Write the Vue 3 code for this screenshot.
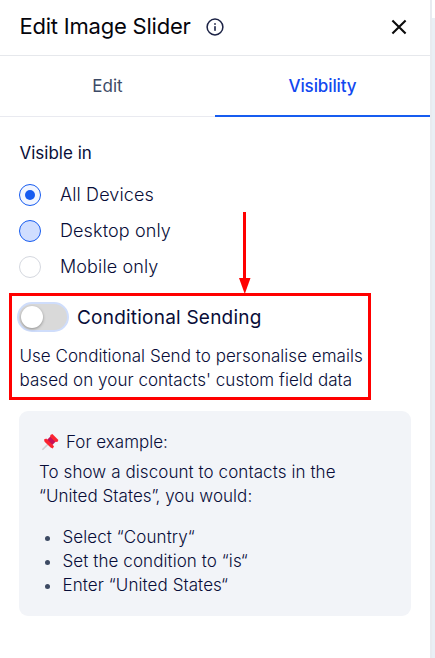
<script setup>
import { ref } from 'vue';

const tabs = ['Edit', 'Visibility'];
const activeTab = ref('Visibility');

const devices = ['All Devices', 'Desktop only', 'Mobile only'];
const selected = ref('All Devices');
const focused = ref('Desktop only');

const conditional = ref(false);

const steps = ['Select “Country“', 'Set the condition to “is“', 'Enter “United States“'];
</script>

<template>
  <main>
    <section class="panel">
      <header>
        <h1>Edit Image Slider</h1>
        <svg class="info" width="18" height="18" viewBox="0 0 18 18">
          <circle cx="9" cy="9" r="7.9" fill="none" stroke="#1b2245" stroke-width="1.5" />
          <rect x="8.2" y="8.2" width="1.6" height="4.6" fill="#1b2245" />
          <rect x="8.2" y="5.2" width="1.6" height="1.6" fill="#1b2245" />
        </svg>
        <button class="close" aria-label="Close">
          <svg width="16" height="16" viewBox="0 0 16 16">
            <path d="M1.4 1.4 14.6 14.6M14.6 1.4 1.4 14.6" stroke="#0c0c0c" stroke-width="2.1" />
          </svg>
        </button>
      </header>

      <nav>
        <button
          v-for="tab in tabs"
          :key="tab"
          class="tab"
          :class="{ active: tab === activeTab }"
          @click="activeTab = tab"
        >
          {{ tab }}
        </button>
      </nav>

      <div class="content">
        <h2>Visible in</h2>
        <div class="options">
          <div
            v-for="device in devices"
            :key="device"
            class="option"
            :class="{ selected: device === selected, focused: device === focused }"
            @click="selected = device"
          >
            <span class="radio"></span>
            <span class="label">{{ device }}</span>
          </div>
        </div>

        <div class="conditional">
          <svg class="arrow" width="12" height="82" viewBox="0 0 12 82">
            <rect x="4" y="0" width="3" height="67" fill="#ff0000" />
            <path d="M0 66H11.5L5.75 82Z" fill="#ff0000" />
          </svg>
          <div class="toggle-row">
            <span class="toggle" :class="{ on: conditional }" @click="conditional = !conditional">
              <span class="knob"></span>
            </span>
            <h3>Conditional Sending</h3>
          </div>
          <p class="line1">Use Conditional Send to personalise emails</p>
          <p class="line2">based on your contacts' custom field data</p>
        </div>

        <div class="example">
          <div class="example-title">
            <svg class="pin" width="18" height="18" viewBox="0 0 18 18">
              <path d="M1.4 16.8 6.8 11.4" stroke="#cfd0d4" stroke-width="1.6" />
              <path d="M5.4 7.4 9.6 3.2 14.8 8.4 10.8 12.6Z" fill="#c5105a" />
              <path d="M3 6.6 5.2 5.4 13 13.2 11.8 15.4 9.6 14.6 3.6 8.8Z" fill="#fb2430" />
              <path d="M9.4 2 11.4 1 17.4 7 16.4 9 14.2 8.8 9.2 3.8Z" fill="#fb2430" />
            </svg>
            <span>For example:</span>
          </div>
          <p class="first">To show a discount to contacts in the</p>
          <p class="second">“United States<span class="tight">”</span>, you would:</p>
          <ul>
            <li v-for="step in steps" :key="step"><span>{{ step }}</span></li>
          </ul>
        </div>
      </div>
    </section>
    <aside></aside>
  </main>
</template>

<style>
body {
  margin: 0;
  background-color: white;
}
</style>

<style scoped>
  main {
    height: 658px;
    width: 435px;
    display: flex;
    overflow: hidden;
    font-family: Inter, "Liberation Sans", sans-serif;
    font-weight: 300;
    color: #080d38;
  }

  h1, h2, h3, p, ul {
    margin: 0;
    padding: 0;
    white-space: nowrap;
  }

  button {
    border: none;
    padding: 0;
    background: none;
    font-family: inherit;
    cursor: pointer;
  }

  svg {
    display: block;
  }

  .panel {
    width: 430px;
    flex: none;
    border-right: 2px solid #e8ebf0;
  }

  aside {
    flex: 1;
    margin-top: 18px;
    background-color: #e9eff5;
  }

  header {
    box-sizing: border-box;
    height: 56px;
    display: flex;
    align-items: center;
    padding: 0 23px 2px 19.5px;
    border-bottom: 1px solid #e6e8ec;
  }

  h1 {
    font-size: 22px;
    line-height: 28px;
    font-weight: 400;
    letter-spacing: -0.22px;
    color: #05050c;
    margin-top: -2px;
  }

  .info {
    margin-left: 15.5px;
  }

  .close {
    margin-left: auto;
  }

  nav {
    display: flex;
    height: 61px;
  }

  .tab {
    flex: 1;
    font-size: 17px;
    font-weight: 400;
    color: #3c4a66;
    border-bottom: 1px solid #e9eaf0;
  }

  .tab.active {
    font-weight: 500;
    letter-spacing: -0.1px;
    color: #1148f0;
    border-bottom: 2px solid #175cf0;
  }

  .content {
    padding: 23px 19px 0 9px;
  }

  h2 {
    font-size: 17px;
    line-height: 26px;
    font-weight: 400;
    padding-left: 10.5px;
  }

  .options {
    padding: 11px 0 0 10px;
  }

  .option {
    height: 36px;
    display: flex;
    align-items: center;
    gap: 19px;
  }

  .radio {
    box-sizing: border-box;
    width: 22px;
    height: 22px;
    border: 1px solid #d5d8df;
    border-radius: 50%;
    display: flex;
    align-items: center;
    justify-content: center;
  }

  .selected .radio {
    border-color: #175cf0;
    background-color: #f2f6ff;
  }

  .selected .radio::after {
    content: "";
    width: 10px;
    height: 10px;
    border-radius: 50%;
    background-color: #175cf0;
  }

  .focused .radio {
    border-color: #175cf0;
    background-color: #d0deff;
  }

  .label {
    font-size: 18px;
    line-height: 24px;
    letter-spacing: 0.12px;
  }

  .conditional {
    position: relative;
    box-sizing: border-box;
    width: 362px;
    height: 107px;
    margin-top: 8px;
    border: 3px solid #ff0000;
    padding: 6px 0 0 5px;
  }

  .arrow {
    position: absolute;
    left: 227px;
    top: -84px;
  }

  .toggle-row {
    display: flex;
    align-items: center;
    gap: 8px;
  }

  .toggle {
    box-sizing: border-box;
    width: 52px;
    height: 30px;
    border: 2px solid #cfddfb;
    border-radius: 15px;
    background-color: #d9d9d9;
    display: flex;
    align-items: center;
    padding: 0 2px;
  }

  .toggle.on {
    justify-content: flex-end;
    background-color: #175cf0;
  }

  .knob {
    width: 22px;
    height: 22px;
    border-radius: 50%;
    background-color: white;
    box-shadow: 0 1px 3px rgba(0, 0, 0, 0.35);
  }

  h3 {
    font-size: 19px;
    line-height: 28px;
    font-weight: 400;
    letter-spacing: 0.22px;
    padding-top: 1px;
  }

  p, li {
    font-size: 17px;
    line-height: 24px;
    letter-spacing: 0.04px;
  }

  .conditional p {
    padding-left: 2.5px;
  }

  .line1 {
    margin-top: 12px;
  }

  .example {
    box-sizing: border-box;
    width: 392px;
    height: 205px;
    margin: 11px 0 0 10px;
    padding: 19px 20px 0;
    border-radius: 9px;
    background-color: #f2f4f8;
  }

  .example-title {
    display: flex;
    align-items: center;
    gap: 7px;
    padding-left: 2px;
    font-size: 17px;
    line-height: 24px;
    margin-bottom: 6px;
  }

  .first {
    letter-spacing: 0.08px;
  }

  .tight {
    letter-spacing: -3px;
  }

  ul {
    list-style: none;
    margin-top: 17px;
  }

  li {
    display: flex;
    align-items: center;
    gap: 12.5px;
    padding-left: 6px;
    letter-spacing: 0.08px;
  }

  li::before {
    content: "";
    width: 5px;
    height: 5px;
    margin-top: 2px;
    border-radius: 50%;
    background-color: #3d4a63;
  }
</style>
